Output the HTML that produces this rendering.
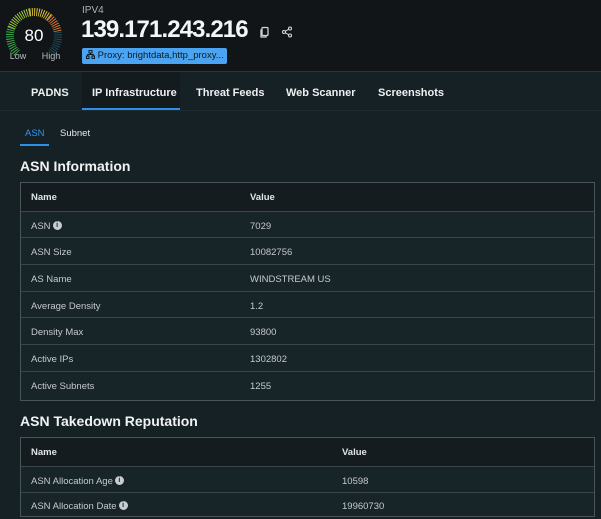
<!DOCTYPE html>
<html><head><meta charset="utf-8"><style>
*{margin:0;padding:0;box-sizing:border-box}
body{width:601px;height:507px;overflow:hidden;background:#162125;font-family:"Liberation Sans",sans-serif;color:#e6e9eb;position:relative}
.top{position:absolute;left:0;top:0;width:601px;height:72px;background:#121518;border-bottom:1px solid #1d3a44}
.abs{position:absolute;white-space:nowrap}
.nav{position:absolute;top:72px;left:0;width:601px;height:39px;border-bottom:1px solid #1f2b30}
.nav span{position:absolute;top:15px;font-size:11px;font-weight:bold;color:#eef0f2}
.tbl{position:absolute;left:20px;width:575px;border:1px solid #4a5559;background:#172428}
.row{position:relative;height:26.7px;border-top:1px solid #3a4649;font-size:9.5px;color:#c5cacd}
.row.h{border-top:none;background:#141c20;font-weight:bold;color:#e2e5e7;height:27.5px}
.row span{position:absolute;top:9px}
.i{display:inline-block;width:9px;height:9px;border-radius:50%;background:#c8cdd0;color:#172428;font-size:7px;font-weight:bold;text-align:center;line-height:9px;vertical-align:top;margin-left:2px;font-style:normal}
h2{position:absolute;left:20px;font-size:14px;font-weight:bold;color:#f0f2f3}
</style></head><body>
<div class="top"></div>
<svg class="abs" style="left:0;top:0" width="70" height="70" viewBox="0 0 70 70">
<g fill="none" stroke-width="8" stroke-dasharray="0.9 1.3">
<path d="M17.03 52.97A24 24 0 0 1 11.45 27.79" stroke="#3bb54a"/>
<path d="M11.45 27.79A24 24 0 0 1 29.83 12.37" stroke="#a6d13e"/>
<path d="M29.83 12.37A24 24 0 0 1 49.43 17.61" stroke="#e6c83a"/>
<path d="M49.43 17.61A24 24 0 0 1 57.7 32.25" stroke="#e67a30"/>
<path d="M57.7 32.25A24 24 0 0 1 50.97 52.97" stroke="#1e4d5a"/>
</g>
<text x="34" y="41" text-anchor="middle" font-size="17" fill="#fff" font-family="Liberation Sans">80</text>
<text x="18" y="59" text-anchor="middle" font-size="9" fill="#b8bec2" font-family="Liberation Sans">Low</text>
<text x="51" y="59" text-anchor="middle" font-size="9" fill="#b8bec2" font-family="Liberation Sans">High</text>
</svg>
<div class="abs" style="left:82px;top:5px;font-size:10px;color:#a9b0b4">IPV4</div>
<div class="abs" style="left:81px;top:16px;font-size:24px;font-weight:bold;color:#f4f5f6;letter-spacing:-0.9px">139.171.243.216</div>
<svg class="abs" style="left:259px;top:26px" width="12" height="12" viewBox="0 0 12 12" fill="none" stroke="#d0d4d6" stroke-width="1.3"><rect x="3" y="1.5" width="6" height="8" rx="1"/><path d="M3 4H2v7h5v-1"/></svg>
<svg class="abs" style="left:281px;top:26px" width="12" height="12" viewBox="0 0 12 12" fill="none" stroke="#d0d4d6" stroke-width="1.1"><circle cx="9" cy="2.5" r="1.5"/><circle cx="3" cy="6" r="1.5"/><circle cx="9" cy="9.5" r="1.5"/><path d="M4.3 5.2L7.7 3.3M4.3 6.8L7.7 8.7"/></svg>
<div class="abs" style="left:82px;top:48px;width:145px;height:16px;background:#4ba4f1;border-radius:2px;font-size:9.5px;color:#0e1a24;line-height:16px;padding-left:4px">
<svg width="9" height="9" viewBox="0 0 9 9" style="vertical-align:-1px" fill="none" stroke="#0e1a24" stroke-width="1"><rect x="3" y="0.5" width="3" height="2.5"/><rect x="0.5" y="6" width="2.5" height="2.5"/><rect x="6" y="6" width="2.5" height="2.5"/><path d="M4.5 3v1.5M1.7 6V4.5h5.6V6"/></svg> Proxy: brightdata,http_proxy...</div>
<div class="nav">
<div class="abs" style="left:82px;top:0;width:98px;height:38px;background:#131b1f;border-bottom:2px solid #2f8fe6"></div>
<span style="left:31px">PADNS</span><span style="left:92px">IP Infrastructure</span><span style="left:196px">Threat Feeds</span><span style="left:286px">Web Scanner</span><span style="left:378px">Screenshots</span>
</div>
<div class="abs" style="left:25px;top:128px;font-size:9.5px;color:#2f95ef">ASN</div>
<div class="abs" style="left:20px;top:144px;width:29px;height:2px;background:#2f8fe6"></div>
<div class="abs" style="left:60px;top:128px;font-size:9.5px;color:#e6e9eb">Subnet</div>
<h2 style="top:158px">ASN Information</h2>
<div class="tbl" style="top:182px">
<div class="row h"><span style="left:10px">Name</span><span style="left:229px">Value</span></div>
<div class="row"><span style="left:10px">ASN<i class="i">i</i></span><span style="left:229px">7029</span></div>
<div class="row"><span style="left:10px">ASN Size</span><span style="left:229px">10082756</span></div>
<div class="row"><span style="left:10px">AS Name</span><span style="left:229px">WINDSTREAM US</span></div>
<div class="row"><span style="left:10px">Average Density</span><span style="left:229px">1.2</span></div>
<div class="row"><span style="left:10px">Density Max</span><span style="left:229px">93800</span></div>
<div class="row"><span style="left:10px">Active IPs</span><span style="left:229px">1302802</span></div>
<div class="row" style="height:29px"><span style="left:10px">Active Subnets</span><span style="left:229px">1255</span></div>
</div>
<h2 style="top:413px">ASN Takedown Reputation</h2>
<div class="tbl" style="top:437px;height:80px">
<div class="row h"><span style="left:10px">Name</span><span style="left:321px">Value</span></div>
<div class="row"><span style="left:10px">ASN Allocation Age<i class="i">i</i></span><span style="left:321px">10598</span></div>
<div class="row"><span style="left:10px;top:8px">ASN Allocation Date<i class="i">i</i></span><span style="left:321px;top:8px">19960730</span></div>
</div>
</body></html>
